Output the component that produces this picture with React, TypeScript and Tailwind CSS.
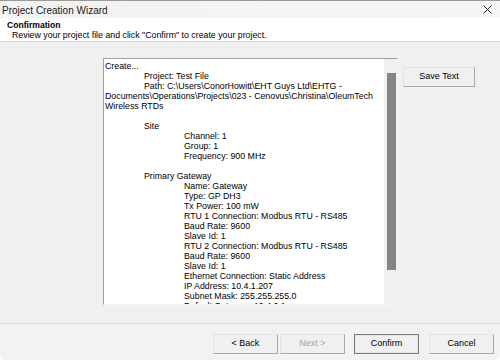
import React from 'react';

const lines: [number, string][] = [
  [0, 'Create...'],
  [1, 'Project: Test File'],
  [1, 'Path: C:\\Users\\ConorHowitt\\EHT Guys Ltd\\EHTG -'],
  [0, 'Documents\\Operations\\Projects\\023 - Cenovus\\Christina\\OleumTech'],
  [0, 'Wireless RTDs'],
  [0, ''],
  [1, 'Site'],
  [2, 'Channel: 1'],
  [2, 'Group: 1'],
  [2, 'Frequency: 900 MHz'],
  [0, ''],
  [1, 'Primary Gateway'],
  [2, 'Name: Gateway'],
  [2, 'Type: GP DH3'],
  [2, 'Tx Power: 100 mW'],
  [2, 'RTU 1 Connection: Modbus RTU - RS485'],
  [2, 'Baud Rate: 9600'],
  [2, 'Slave Id: 1'],
  [2, 'RTU 2 Connection: Modbus RTU - RS485'],
  [2, 'Baud Rate: 9600'],
  [2, 'Slave Id: 1'],
  [2, 'Ethernet Connection: Static Address'],
  [2, 'IP Address: 10.4.1.207'],
  [2, 'Subnet Mask: 255.255.255.0'],
  [2, 'Default Gateway: 10.4.0.1'],
];

const indent = ['pl-0', 'pl-[39px]', 'pl-[79px]'];

const WinButton: React.FC<{ label: string; disabled?: boolean; primary?: boolean; className?: string }> = ({ label, disabled, primary, className }) => (
  <button
    className={
      'h-[20px] w-[65px] flex items-center justify-center text-[9px] bg-[#f0f0f0] ' +
      (primary
        ? 'border border-[#7a7a7a] shadow-[inset_0_0_0_1px_#e6e6e6] '
        : 'border border-t-[#e3e3e3] border-l-[#e3e3e3] border-r-[#a9a9a9] border-b-[#a9a9a9] ') +
      (disabled ? 'text-[#a3a3a3] ' : 'text-black ') +
      (className ?? '')
    }
  >
    {label}
  </button>
);

export default function App() {
  return (
    <div
      className="w-[500px] h-[360px] flex flex-col bg-[#f0f0f0] overflow-hidden border-t border-[#9a9a9a] rounded-b-[6px]"
      style={{ fontFamily: '"Liberation Sans", Arial, sans-serif' }}
    >
      {/* title bar */}
      <div className="h-[17px] flex items-center justify-between bg-gradient-to-r from-[#f2f2f2] to-[#f6f6f9]">
        <span className="pl-[2px] pt-[1px] text-[10px] text-[#1a1a1a]">Project Creation Wizard</span>
        <svg width="9" height="9" viewBox="0 0 9 9" className="mr-[8px]">
          <path d="M0.5 0.5 L8.5 8.5 M8.5 0.5 L0.5 8.5" stroke="#222" strokeWidth="1" />
        </svg>
      </div>

      {/* header */}
      <div className="h-[24px] bg-white border-b border-[#d9d9d9] flex flex-col justify-end pb-[1px]">
        <div className="pl-[7px] text-[8.6px] leading-[10px] font-bold text-black">Confirmation</div>
        <div className="pl-[12px] text-[8.8px] leading-[10px] text-black">
          Review your project file and click "Confirm" to create your project.
        </div>
      </div>

      {/* body */}
      <div className="flex-1 flex items-start pl-[103px] pt-[16px]">
        <div className="w-[295px] h-[247px] flex border-l border-t border-[#a0a0a0] border-r border-r-[#f5f5f5] border-b border-b-[#f5f5f5] bg-white">
          <div className="flex-1 overflow-hidden pl-[1px] pt-[2px] text-[8.8px] leading-[10px] text-black whitespace-nowrap">
            {lines.map(([lvl, t], i) => (
              <div key={i} className={'h-[10px] ' + indent[lvl]}>
                {t}
              </div>
            ))}
          </div>
          <div className="w-[13px] bg-[#f0f0f0] pt-[14px] pl-[3px]">
            <div className="w-[9px] h-[197px] bg-[#858585]" />
          </div>
        </div>
        <WinButton label="Save Text" className="ml-[5px] mt-[9px] w-[72px]" />
      </div>

      {/* footer */}
      <div className="h-[37px] border-t border-[#d6d6d6] bg-[#f2f2f2] flex items-start justify-end pt-[10px] pr-[6px]">
        <WinButton label="< Back" />
        <WinButton label="Next >" disabled className="ml-[2px]" />
        <WinButton label="Confirm" primary className="ml-[9px]" />
        <WinButton label="Cancel" className="ml-[10px]" />
      </div>
    </div>
  );
}
